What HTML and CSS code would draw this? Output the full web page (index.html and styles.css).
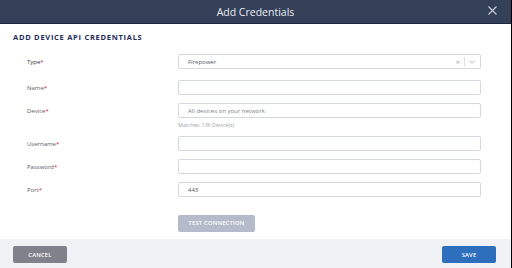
FILE: index.html
```html
<!DOCTYPE html>
<html>
<head>
<meta charset="utf-8">
<link rel="stylesheet" href="styles.css">
</head>
<body>
<div class="modal">
  <header class="modal-header">
    <h1 class="modal-title">Add Credentials</h1>
    <button class="close" aria-label="Close">
      <svg width="9" height="9" viewBox="0 0 9 9"><path d="M0.5 0.5L8.5 8.5M8.5 0.5L0.5 8.5" stroke="#c9cdd8" stroke-width="1.1" fill="none"/></svg>
    </button>
  </header>
  <main class="modal-body">
    <h2 class="section-title">ADD DEVICE API CREDENTIALS</h2>
    <div class="form">
      <div class="row row-type">
        <label class="label label-strong">Type<span class="req">*</span></label>
        <div class="field select">
          <span class="value">Firepower</span>
          <span class="select-tools">
            <span class="clear">×</span>
            <span class="sep"></span>
            <svg class="chev" width="6" height="4" viewBox="0 0 6 4"><path d="M0.5 0.8L3 3.2L5.5 0.8" stroke="#a9adb8" stroke-width="0.9" fill="none"/></svg>
          </span>
        </div>
      </div>
      <div class="row row-name">
        <label class="label">Name<span class="req">*</span></label>
        <div class="field"></div>
      </div>
      <div class="row row-device">
        <label class="label">Device<span class="req">*</span></label>
        <div class="field"><span class="placeholder">All devices on your network</span></div>
      </div>
      <div class="hint">Matches: 136 Device(s)</div>
      <div class="row row-user">
        <label class="label">Username<span class="req">*</span></label>
        <div class="field"></div>
      </div>
      <div class="row">
        <label class="label">Password<span class="req">*</span></label>
        <div class="field"></div>
      </div>
      <div class="row">
        <label class="label">Port<span class="req">*</span></label>
        <div class="field"><span class="value">443</span></div>
      </div>
      <div class="actions">
        <button class="btn btn-test">TEST CONNECTION</button>
      </div>
    </div>
  </main>
  <footer class="modal-footer">
    <button class="btn btn-cancel">CANCEL</button>
    <button class="btn btn-save">SAVE</button>
  </footer>
</div>
</body>
</html>
```
FILE: styles.css
```css
* { box-sizing: border-box; }
html, body { margin: 0; padding: 0; }
body {
  background: #000;
  width: 512px;
  height: 268px;
  overflow: hidden;
  font-family: "Open Sans", "Liberation Sans", sans-serif;
}
.modal {
  width: 511px;
  height: 268px;
  background: #fff;
  display: flex;
  flex-direction: column;
}
.modal-header {
  height: 24px;
  background: #343f58;
  border-bottom: 1px solid #1d2743;
  display: flex;
  align-items: center;
  justify-content: center;
  position: relative;
}
.modal-title {
  margin: 0;
  font-size: 10.5px;
  font-weight: 400;
  color: #e9ecf2;
  line-height: 12px;
}
.close {
  position: absolute;
  right: 14px;
  top: 6px;
  padding: 0;
  border: 0;
  background: none;
  width: 9px;
  height: 9px;
  display: flex;
}
.modal-body {
  flex: 1;
  padding: 8px 0 0 13px;
}
.section-title {
  margin: 0;
  font-size: 7.5px;
  line-height: 10px;
  font-weight: 700;
  letter-spacing: 0.72px;
  color: #262b5a;
}
.form {
  margin-top: 12px;
  display: flex;
  flex-direction: column;
}
.row {
  display: flex;
  align-items: center;
  height: 15px;
  margin-top: 8px;
}
.row-type { margin-top: 0; }
.row-name { margin-top: 11px; }
.row-user { margin-top: 7px; }
.label {
  width: 165px;
  padding-left: 14px;
  font-size: 6px;
  color: #5d6068;
}
.label-strong { color: #2f323a; }
.req { color: #d0262d; }
.field {
  width: 303px;
  height: 15px;
  border: 1px solid #d6d8df;
  border-radius: 2px;
  display: flex;
  align-items: center;
  padding-left: 9px;
  font-size: 6px;
}
.value { color: #555860; }
.placeholder { color: #7c7f88; }
.select { justify-content: space-between; padding-right: 5px; }
.select-tools { display: flex; align-items: center; gap: 4px; }
.clear { color: #a9adb8; font-size: 8px; line-height: 8px; }
.sep { width: 1px; height: 9px; background: #dcdee4; }
.hint {
  margin: 3px 0 0 165px;
  font-size: 5.3px;
  line-height: 8px;
  color: #a0a3ab;
}
.actions {
  margin: 11px 0 0 165px;
}
.btn {
  border: 0;
  border-radius: 2px;
  color: #fff;
  font-family: inherit;
  font-size: 5.8px;
  font-weight: 600;
  letter-spacing: 0.2px;
  padding: 0;
  height: 17px;
}
.btn-test {
  width: 77px;
  background: #b5bbca;
}
.modal-footer {
  height: 29px;
  background: #f1f2f6;
  display: flex;
  justify-content: space-between;
  align-items: flex-start;
  padding: 7px 15px 0 13px;
}
.btn-cancel { width: 54px; background: #80818b; }
.btn-save { width: 54px; background: #2e6fbd; }
```
